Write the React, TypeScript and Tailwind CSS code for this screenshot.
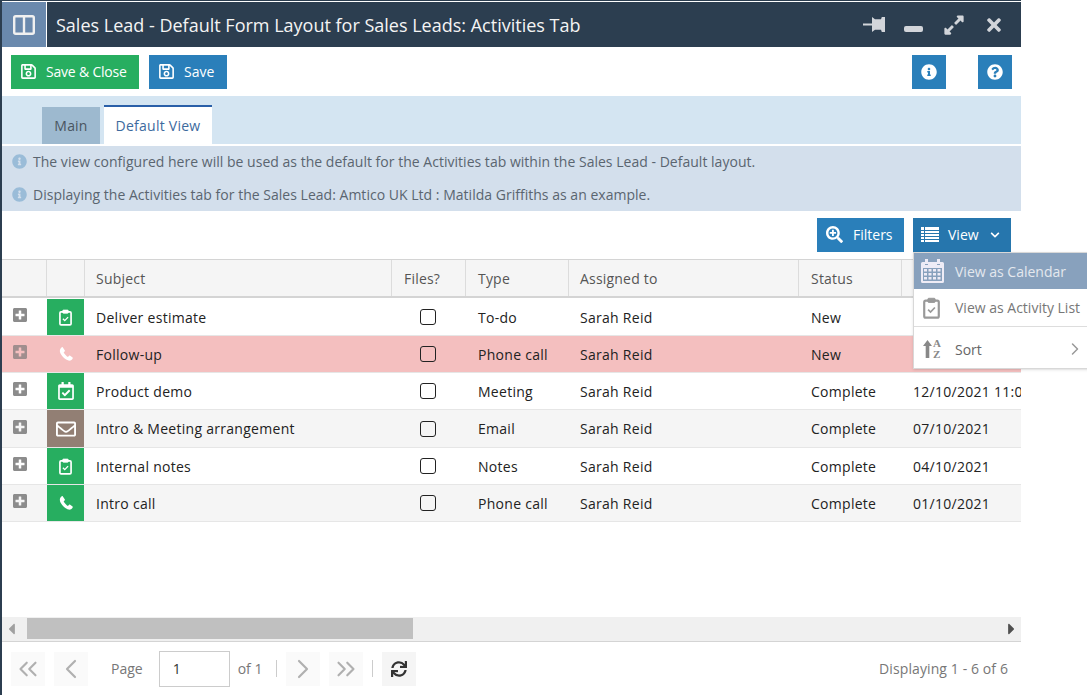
import {
  FaRegSave,
  FaExpandAlt,
  FaTimes,
  FaInfoCircle,
  FaQuestionCircle,
  FaSearchPlus,
  FaChevronDown,
  FaPlusSquare,
  FaRegEnvelope,
  FaRegCalendarCheck,
  FaSync,
  FaCaretLeft,
  FaCaretRight,
} from 'react-icons/fa';
import { ChevronLeft, ChevronRight, ChevronsLeft, ChevronsRight } from 'lucide-react';

type Kind = 'task' | 'phone' | 'meeting' | 'email';

interface Row {
  subject: string;
  type: string;
  status: string;
  date: string;
  kind: Kind;
  height: string;
  stripe?: boolean;
  overdue?: boolean;
}

const rows: Row[] = [
  { subject: 'Deliver estimate', type: 'To-do', status: 'New', date: '', kind: 'task', height: 'h-[38px] pt-[1px]' },
  { subject: 'Follow-up', type: 'Phone call', status: 'New', date: '', kind: 'phone', height: 'h-[37px]', overdue: true },
  { subject: 'Product demo', type: 'Meeting', status: 'Complete', date: '12/10/2021 11:00', kind: 'meeting', height: 'h-[37px]' },
  { subject: 'Intro & Meeting arrangement', type: 'Email', status: 'Complete', date: '07/10/2021', kind: 'email', height: 'h-[38px]', stripe: true },
  { subject: 'Internal notes', type: 'Notes', status: 'Complete', date: '04/10/2021', kind: 'task', height: 'h-[37px]' },
  { subject: 'Intro call', type: 'Phone call', status: 'Complete', date: '01/10/2021', kind: 'phone', height: 'h-[37px]', stripe: true },
];

function ClipboardCheck({ className }: { className?: string }) {
  return (
    <svg viewBox="0 0 14 18" className={className} fill="none" stroke="currentColor">
      <rect x="1" y="3" width="12" height="14" rx="1.2" strokeWidth="1.8" />
      <rect x="4" y="1" width="6" height="3.4" rx="0.8" fill="currentColor" strokeWidth="0.8" />
      <path d="M4.2 10.4l2 2 3.6-3.8" strokeWidth="1.4" />
    </svg>
  );
}

function PhoneIcon() {
  return (
    <svg viewBox="0 0 17 17" className="w-[16px] h-[16px] text-white" fill="currentColor">
      <path d="M4 1.2C2 2.6 1.2 5 2.8 8.2c1.9 3.6 4.9 6.2 8.3 7.3 2.1.5 3.9-.7 4.6-2.6.1-.3 0-.5-.2-.7l-2.9-2c-.3-.2-.6-.1-.8.1l-1.3 1.3C9 10.6 7 8.6 6 6.8l1.2-1.2c.2-.2.3-.5.1-.8L5 1.4c-.3-.4-.7-.4-1-.2z" />
    </svg>
  );
}

function PinIcon() {
  return (
    <svg viewBox="0 0 22 15" className="w-[22px] h-[15px]" fill="currentColor">
      <path d="M22 0v15h-3.2l-.8-2.2h-6L9 15V8.4H0V6.6h9V0l3 2.2h6L18.800 0z" />
    </svg>
  );
}

function ListIcon() {
  return (
    <svg viewBox="0 0 18 15" className="w-[18px] h-[15px]" fill="currentColor">
      <path d="M0 0h3v3H0zM4 0h14v3H4zM0 4h3v2H0zM4 4h14v2H4zM0 7h3v2H0zM4 7h14v2H4zM0 10h3v2H0zM4 10h14v2H4zM0 13h3v2H0zM4 13h14v2H4z" />
    </svg>
  );
}

function CalendarIcon() {
  return (
    <svg viewBox="0 0 23 24" className="w-[23px] h-[24px] ml-[7px] text-[#eeecf6]" fill="currentColor">
      <path d="M4 0h3v5H4zM16 0h3v5h-3z" />
      <path d="M1.500 3H4v3h3V3h9v3h3V3h2.500A1.500 1.500 0 0 1 23 4.500v18a1.500 1.500 0 0 1-1.500 1.500h-20A1.500 1.500 0 0 1 0 22.500v-18A1.500 1.500 0 0 1 1.500 3zM2 9v13h19V9z" />
      <path d="M3 10h3v2.500H3zM7.500 10h3v2.500h-3zM12 10h3v2.500h-3zM16.500 10h3v2.500h-3zM3 14h3v2.500H3zM7.500 14h3v2.500h-3zM12 14h3v2.500h-3zM16.500 14h3v2.500h-3zM3 18h3v2.500H3zM7.500 18h3v2.500h-3zM12 18h3v2.500h-3zM16.500 18h3v2.500h-3z" />
    </svg>
  );
}

function KindIcon({ kind }: { kind: Kind }) {
  if (kind === 'task') return <ClipboardCheck className="w-[13px] h-[17px] text-white" />;
  if (kind === 'phone') return <PhoneIcon />;
  if (kind === 'meeting') return <FaRegCalendarCheck className="text-white text-[18px]" />;
  return <FaRegEnvelope className="text-white text-[20px]" />;
}

function Cell({ className, children }: { className: string; children?: React.ReactNode }) {
  return <div className={`shrink-0 flex items-center h-full ${className}`}>{children}</div>;
}

function HeaderCell({ className, children }: { className: string; children?: React.ReactNode }) {
  return (
    <div className={`shrink-0 h-[36px] flex items-center pl-[11px] tracking-[0.2px] border-r border-[#dcdcdc] ${className}`}>
      {children}
    </div>
  );
}

function PagerButton({ children }: { children: React.ReactNode }) {
  return (
    <button className="w-[34px] h-[34px] flex items-center justify-center bg-[#fafafa] text-[#b0b0b0]">
      {children}
    </button>
  );
}

function Divider() {
  return <span className="w-px h-[17px] bg-[#cccccc]" />;
}

function TableRow({ row }: { row: Row }) {
  const bg = row.overdue ? 'bg-[#f4bfbf]' : row.stripe ? 'bg-[#f5f5f5]' : 'bg-white';
  const iconBg = row.overdue ? '' : row.kind === 'email' ? 'bg-[#927f74]' : 'bg-[#27ae60]';
  return (
    <div className={`flex ${row.height} border-b border-[#e6e6e6] text-[14px] text-[#222222] tracking-[0.28px] ${bg}`}>
      <Cell className="w-[45px] pl-[10px] pb-[4px]">
        <FaPlusSquare className={`text-[16px] ${row.overdue ? 'text-[#a08e8e]' : 'text-[#8c8c8c]'}`} />
      </Cell>
      <Cell className={`w-[37px] justify-center ${iconBg}`}>
        <KindIcon kind={row.kind} />
      </Cell>
      <Cell className="w-[308px] pl-[12px]">{row.subject}</Cell>
      <Cell className="w-[74px] justify-center pr-[3px]">
        <span className="w-[16px] h-[16px] border-[1.5px] border-[#222222] rounded-[3px]" />
      </Cell>
      <Cell className="w-[103px] pl-[12px]">{row.type}</Cell>
      <Cell className="w-[230px] pl-[11px]">Sarah Reid</Cell>
      <Cell className="w-[102px] pl-[12px]">{row.status}</Cell>
      <Cell className="w-[120px] pl-[12px] whitespace-nowrap">{row.date}</Cell>
    </div>
  );
}

export default function App() {
  return (
    <div className="relative w-[1087px] h-[695px] bg-white overflow-hidden font-['Open_Sans',sans-serif]">
      <div className="w-[1021px] h-[695px] border-l-[2px] border-[#2c3e50] flex flex-col">
        {/* Title bar */}
        <div className="h-[2px] bg-white border-t border-[#2c3e50]" />
        <div className="h-[45px] bg-[#2c3e50] flex items-center text-white shrink-0">
          <div className="w-[45px] h-full bg-[#6a89ad] border-r border-white flex items-center justify-center">
            <svg viewBox="0 0 22 20" className="w-[22px] h-[20px]" fill="none" stroke="#f0f0f0" strokeWidth="2.4">
              <rect x="1.2" y="1.2" width="19.6" height="17.6" rx="1.5" />
              <path d="M11 1v18" />
            </svg>
          </div>
          <h1 className="pl-[9px] pt-[2px] text-[18px] text-[#f4f4f4]">Sales Lead - Default Form Layout for Sales Leads: Activities Tab</h1>
          <div className="ml-auto flex items-center text-[#d2d5da]">
            <PinIcon />
            <span className="ml-[19px] mt-[8px] w-[19px] h-[6px] rounded-[2px] bg-[#d2d5da]" />
            <FaExpandAlt className="ml-[20px] text-[22px]" />
            <FaTimes className="ml-[19px] mr-[17px] text-[20px]" />
          </div>
        </div>

        {/* Toolbar */}
        <div className="h-[49px] shrink-0 flex items-center pl-[9px] text-white text-[14px]">
          <button className="w-[128px] h-[34px] bg-[#27ae60] flex items-center pl-[9px] tracking-[-0.2px]">
            <FaRegSave className="text-[17px] mr-[9px]" />
            Save &amp; Close
          </button>
          <button className="ml-[10px] w-[78px] h-[34px] bg-[#2a7fba] flex items-center pl-[9px]">
            <FaRegSave className="text-[17px] mr-[9px]" />
            Save
          </button>
          <button className="ml-auto w-[34px] h-[34px] bg-[#2a7fba] flex items-center justify-center">
            <FaInfoCircle className="text-[16px]" />
          </button>
          <button className="ml-[32px] mr-[9px] w-[34px] h-[34px] bg-[#2a7fba] flex items-center justify-center">
            <FaQuestionCircle className="text-[16px]" />
          </button>
        </div>

        {/* Tabs */}
        <div className="h-[48px] shrink-0 bg-[#d4e5f2] flex items-end pl-[40px] text-[14px]">
          <div className="w-[58px] h-[37px] bg-[#9db9cf] text-[#4a5560] flex items-center justify-center tracking-[0.2px]">Main</div>
          <div className="ml-[4px] w-[108px] h-[39px] bg-white border-t-[2px] border-[#2a5fa8] text-[#3d6a9e] flex items-center justify-center tracking-[0.25px]">
            Default View
          </div>
        </div>

        {/* Notice */}
        <div className="mt-[2px] h-[65px] shrink-0 bg-[#d3dfec] text-[14px] text-[#5a6570] flex flex-col justify-center gap-[16px] pl-[10px] pb-[2px] tracking-[0.02px]">
          <p className="flex items-center leading-[17px] gap-[6px]">
            <FaInfoCircle className="text-[15px] text-[#9abcd8] shrink-0" />
            The view configured here will be used as the default for the Activities tab within the Sales Lead - Default layout.
          </p>
          <p className="flex items-center leading-[17px] gap-[6px]">
            <FaInfoCircle className="text-[15px] text-[#9abcd8] shrink-0" />
            Displaying the Activities tab for the Sales Lead: Amtico UK Ltd : Matilda Griffiths as an example.
          </p>
        </div>

        {/* Grid actions */}
        <div className="h-[48px] shrink-0 flex items-start pt-[7px] justify-end pr-[10px] text-white text-[14px]">
          <button className="w-[87px] h-[34px] bg-[#2a7fba] flex items-center pl-[9px] pb-[1px]">
            <FaSearchPlus className="text-[17px] mr-[10px]" />
            Filters
          </button>
          <button className="ml-[9px] w-[98px] h-[34px] bg-[#2676ad] flex items-center pl-[8px] pb-[1px]">
            <ListIcon />
            <span className="ml-[9px]">View</span>
            <FaChevronDown className="text-[10px] ml-[11px]" />
          </button>
        </div>

        {/* Grid */}
        <div className="overflow-hidden flex-1 flex flex-col min-h-0">
          <div className="w-[1150px] flex h-[39px] shrink-0 bg-[#f5f5f5] border-t border-[#d4d4d4] border-b-[2px] text-[14px] text-[#555555]">
            <HeaderCell className="w-[45px]" />
            <HeaderCell className="w-[38px]" />
            <HeaderCell className="w-[307px]">Subject</HeaderCell>
            <HeaderCell className="w-[74px] pl-[12px]">Files?</HeaderCell>
            <HeaderCell className="w-[103px] pl-[12px]">Type</HeaderCell>
            <HeaderCell className="w-[230px]">Assigned to</HeaderCell>
            <HeaderCell className="w-[103px] pl-[12px]">Status</HeaderCell>
            <HeaderCell className="w-[120px] border-r-0" />
          </div>
          <div className="w-[1019px] overflow-hidden">
            <div className="w-[1150px]">
              {rows.map((row) => (
                <TableRow key={row.subject} row={row} />
              ))}
            </div>
          </div>

          <div className="flex-1" />

          {/* Horizontal scrollbar */}
          <div className="h-[25px] shrink-0 bg-[#f0f0f0] border-b border-[#d4d4d4] flex items-center pb-[1px] text-[#505050]">
            <FaCaretLeft className="w-[11px] h-[18px] ml-[4px] text-[#a0a0a0]" />
            <div className="ml-[10px] w-[386px] h-[21px] bg-[#c0c0c0]" />
            <FaCaretRight className="w-[11px] h-[18px] ml-auto mr-[4px]" />
          </div>

          {/* Pager */}
          <div className="h-[53px] shrink-0 flex items-center pl-[9px] pr-[13px] text-[14px] text-[#777777]">
            <PagerButton><ChevronsLeft size={30} strokeWidth={1.7} /></PagerButton>
            <span className="ml-[9px]"><PagerButton><ChevronLeft size={32} strokeWidth={1.6} /></PagerButton></span>
            <span className="ml-[9px] mr-[14px]"><Divider /></span>
            Page
            <input
              readOnly
              value="1"
              className="ml-[16px] w-[71px] h-[36px] border border-[#cccccc] pl-[13px] text-[#333333] outline-none"
            />
            <span className="ml-[8px] mr-[14px]">of 1</span>
            <Divider />
            <span className="ml-[9px]"><PagerButton><ChevronRight size={32} strokeWidth={1.6} /></PagerButton></span>
            <span className="ml-[9px] mr-[9px]"><PagerButton><ChevronsRight size={30} strokeWidth={1.7} /></PagerButton></span>
            <Divider />
            <button className="ml-[9px] w-[34px] h-[34px] flex items-center justify-center bg-[#f5f5f5] text-[#333333]">
              <FaSync className="text-[16px]" />
            </button>
            <span className="ml-auto tracking-[0.1px]">Displaying 1 - 6 of 6</span>
          </div>
        </div>
      </div>

      {/* View dropdown */}
      <div className="absolute left-[913px] top-[252px] w-[180px] h-[117px] bg-white border border-[#d8d8d8] shadow-sm text-[14px] text-[#777777]">
        <div className="h-[36px] bg-[#88a1bd] text-[#e4e8ee] flex items-center whitespace-nowrap">
          <CalendarIcon />
          <span className="ml-[11px]">View as Calendar</span>
        </div>
        <div className="h-[38px] border-b border-[#dddddd] flex items-center whitespace-nowrap">
          <ClipboardCheck className="ml-[9px] w-[17px] h-[22px] text-[#999999]" />
          <span className="ml-[15px] pr-[6px]">View as Activity List</span>
        </div>
        <div className="h-[41px] pt-[3px] flex items-center text-[#666666] w-[173px]">
          <svg viewBox="0 0 9 18" className="ml-[9px] w-[9px] h-[18px] text-[#888888]" fill="currentColor">
            <path d="M4.500 0L9 6H6.300v12H2.700V6H0z" />
          </svg>
          <span className="ml-[1px] flex flex-col font-['Liberation_Serif',serif] font-bold text-[11px] leading-[11px] text-[#888888]">
            <span>A</span>
            <span>Z</span>
          </span>
          <span className="ml-[14px]">Sort</span>
          <ChevronRight size={20} strokeWidth={1.8} className="ml-auto mr-[2px] text-[#999999]" />
        </div>
      </div>
    </div>
  );
}
